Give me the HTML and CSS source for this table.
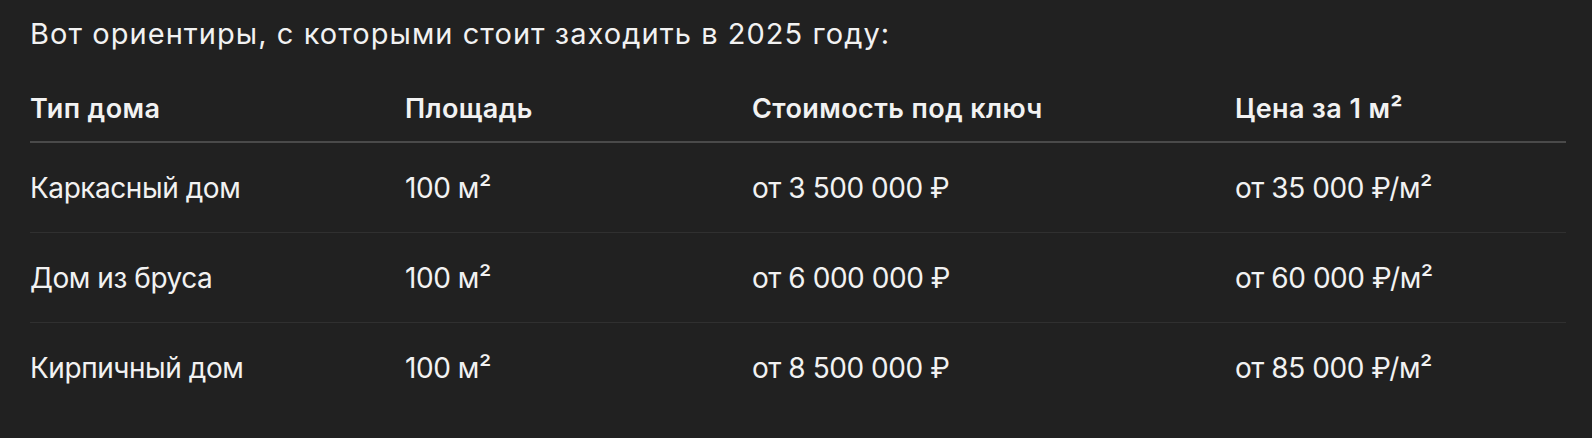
FILE: index.html
```html
<!DOCTYPE html>
<html lang="ru">
<head>
<meta charset="utf-8">
<link rel="stylesheet" href="styles.css">
</head>
<body>
<div class="content">
  <p class="intro">Вот ориентиры, с которыми стоит заходить в 2025 году:</p>
  <table class="prices">
    <colgroup>
      <col class="c1"><col class="c2"><col class="c3"><col class="c4">
    </colgroup>
    <thead>
      <tr><th>Тип дома</th><th>Площадь</th><th>Стоимость под ключ</th><th>Цена за 1 м²</th></tr>
    </thead>
    <tbody>
      <tr><td>Каркасный дом</td><td>100 м²</td><td>от 3 500 000 ₽</td><td>от 35 000 ₽/м²</td></tr>
      <tr><td>Дом из бруса</td><td>100 м²</td><td>от 6 000 000 ₽</td><td>от 60 000 ₽/м²</td></tr>
      <tr><td>Кирпичный дом</td><td>100 м²</td><td>от 8 500 000 ₽</td><td>от 85 000 ₽/м²</td></tr>
    </tbody>
  </table>
</div>
</body>
</html>
```
FILE: styles.css
```css
html, body {
  margin: 0;
  background: #212121;
}
body {
  font-family: Inter, "Noto Sans", sans-serif;
  color: #f2f2f2;
  height: 438px;
  overflow: hidden;
}
.content {
  padding: 14px 0 0 30px;
  width: 1536px;
}
.intro {
  margin: 0;
  font-size: 29px;
  letter-spacing: 1.05px;
  line-height: 40px;
}
.prices {
  margin-top: 37px;
  width: 1536px;
  border-collapse: collapse;
  table-layout: fixed;
}
.c1 { width: 375px; }
.c2 { width: 347px; }
.c3 { width: 483px; }
.c4 { width: 331px; }
.prices th {
  text-align: left;
  font-size: 27px;
  font-weight: 600;
  letter-spacing: 0.4px;
  line-height: 36px;
  padding: 0 0 14px 0;
  border-bottom: 2px solid #4a4a4a;
}
.prices td {
  font-size: 28px;
  letter-spacing: -0.45px;
  line-height: 40px;
  padding: 25px 0 24px 0;
  white-space: nowrap;
}
.prices tbody tr + tr td {
  border-top: 1px solid #303030;
}
```
